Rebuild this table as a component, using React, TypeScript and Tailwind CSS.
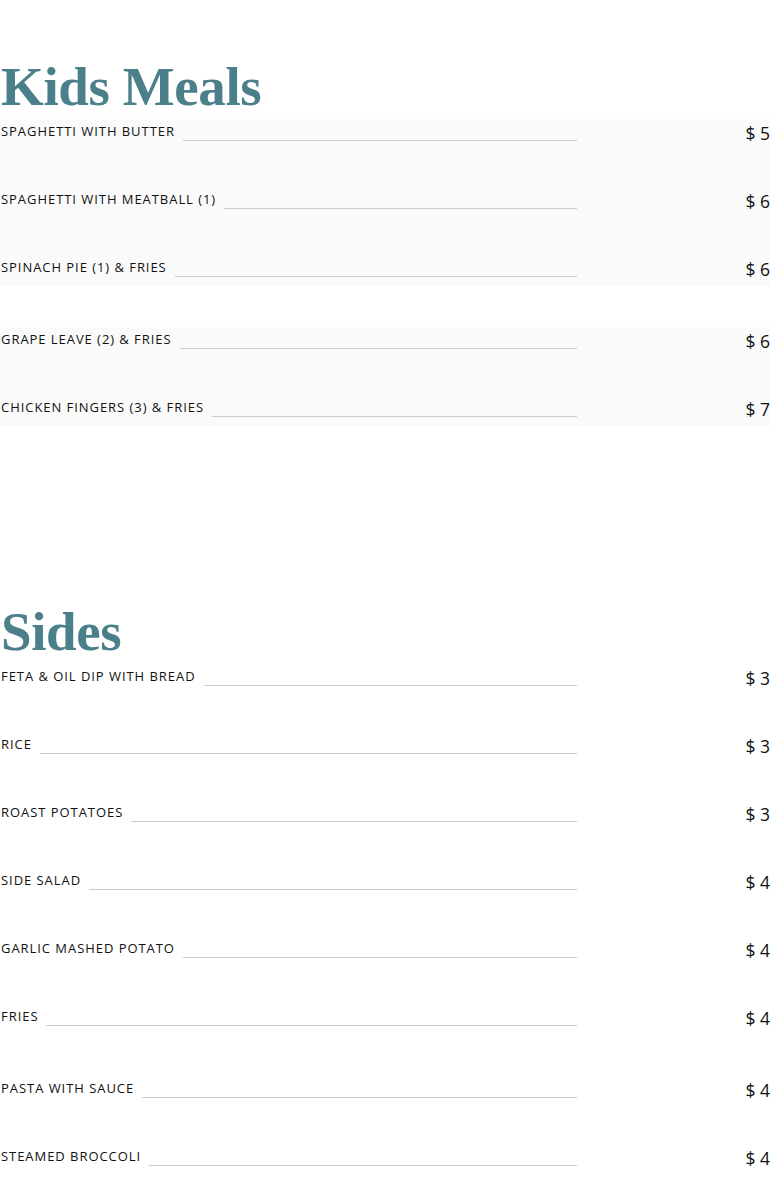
import React from 'react';

type Item = { name: string; price: string };

interface SectionProps {
  title: string;
  groups: Item[][];
  shaded?: boolean;
}

const kidsMeals: Item[][] = [
  [
    { name: 'Spaghetti with butter', price: '$ 5' },
    { name: 'Spaghetti with meatball (1)', price: '$ 6' },
    { name: 'Spinach pie (1) & fries', price: '$ 6' },
  ],
  [
    { name: 'Grape leave (2) & fries', price: '$ 6' },
    { name: 'Chicken fingers (3) & fries', price: '$ 7' },
  ],
];

const sides: Item[][] = [
  [
    { name: 'Feta & oil dip with bread', price: '$ 3' },
    { name: 'Rice', price: '$ 3' },
    { name: 'Roast potatoes', price: '$ 3' },
    { name: 'Side salad', price: '$ 4' },
    { name: 'Garlic mashed potato', price: '$ 4' },
    { name: 'Fries', price: '$ 4' },
  ],
  [
    { name: 'Pasta with sauce', price: '$ 4' },
    { name: 'Steamed broccoli', price: '$ 4' },
  ],
];

const MenuRow: React.FC<{ item: Item }> = ({ item }) => (
  <div className="flex h-[31px] items-start">
    <div className="flex flex-1 items-start pl-px">
      <span className="text-[13px] leading-[24px] tracking-[0.95px] uppercase text-[#111] whitespace-nowrap">
        {item.name}
      </span>
      <div className="ml-2 mt-[21px] flex-1 border-b border-[#cccccc]" />
    </div>
    <div className="w-[193px] text-right text-[17.5px] leading-[29px] text-[#111]">{item.price}</div>
  </div>
);

const MenuSection: React.FC<SectionProps> = ({ title, groups, shaded }) => (
  <section>
    <h2 className="h-[60px] pl-px font-['Liberation_Serif',serif] text-[55px] font-bold leading-[56px] tracking-[-0.4px] text-[#4b808b]">
      {title}
    </h2>
    <div className="flex flex-col gap-[41px]">
      {groups.map((group, i) => (
        <div key={i} className={`flex flex-col gap-[37px] ${shaded ? 'bg-[#fafafa]' : 'bg-white'}`}>
          {group.map(item => (
            <MenuRow key={item.name} item={item} />
          ))}
        </div>
      ))}
    </div>
  </section>
);

export default function App() {
  return (
    <div className="min-h-[1180px] w-[770px] bg-white pt-[59px] font-['Open_Sans',sans-serif]">
      <MenuSection title="Kids Meals" groups={kidsMeals} shaded />
      <div className="h-[178px]" />
      <MenuSection title="Sides" groups={sides} />
    </div>
  );
}
